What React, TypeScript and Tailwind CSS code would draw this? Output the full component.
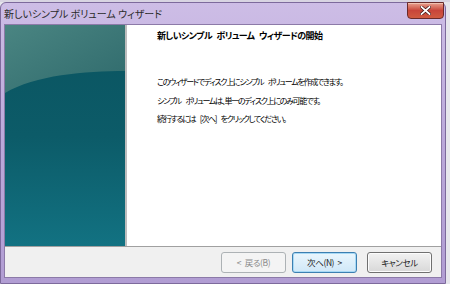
import React from "react";

const jp = "font-['Noto_Sans_CJK_JP','Noto_Sans',sans-serif] [font-feature-settings:'palt']";

function SidePanel() {
  return (
    <div className="relative w-[120px] shrink-0 bg-gradient-to-b from-[#0a5460] via-[#0c5b68] to-[#127282]">
      <svg className="absolute inset-0" width="120" height="222" viewBox="0 0 120 222">
        <defs>
          <linearGradient id="gloss" x1="0" y1="0" x2="1" y2="1">
            <stop offset="0" stopColor="#4a8582" />
            <stop offset="1" stopColor="#2f6a6c" />
          </linearGradient>
        </defs>
        <path d="M0 0 H120 V46 C80 46 30 50 0 68 Z" fill="url(#gloss)" />
      </svg>
    </div>
  );
}

function Btn({ label, kind }: { label: string; kind: "disabled" | "default" | "normal" }) {
  const base = "w-[65px] h-[21px] rounded-[3px] flex items-center justify-center text-[8.5px] tracking-[-0.4px] [word-spacing:2px] leading-none";
  if (kind === "disabled")
    return (
      <div className={`${base} border border-[#adb2b5] bg-[#f4f4f4] text-[#8a8a8a]`}>{label}</div>
    );
  if (kind === "default")
    return (
      <div className={`${base} border border-[#3c7fb1] bg-gradient-to-b from-[#eaf6fd] to-[#d0e8f8] text-[#1a1a1a] shadow-[inset_0_0_0_1px_#a7d9f5]`}>
        {label}
      </div>
    );
  return (
    <div className={`${base} border border-[#707070] bg-gradient-to-b from-[#f2f2f2] to-[#d8d8d8] text-[#1a1a1a] shadow-[inset_0_0_0_1px_#fcfcfc]`}>
      {label}
    </div>
  );
}

export default function App() {
  return (
    <div className={`w-[450px] h-[284px] bg-[#e6e6ec] overflow-hidden ${jp}`}>
      <div className="h-[2px] bg-[#d8d4e2]" />
      <div className="w-[446px] h-[282px] flex flex-col rounded-t-[6px] border border-[#7d6a9c] bg-gradient-to-b from-[#cdbde6] via-[#bba8da] to-[#b19dd3]">
        <div className="relative h-[21px] shrink-0 flex items-center pl-[3px]">
          <span className="text-[10px] text-[#2a2a2a] leading-none">新しいシンプル ボリューム ウィザード</span>
          <div className="absolute right-[1px] top-[-1px] w-[37px] h-[17px] rounded-b-[4px] border border-[#6a2a2a] bg-gradient-to-b from-[#e8a090] via-[#c8453a] to-[#d05a40] flex items-center justify-center shadow-[inset_0_1px_0_#f0c0b0]">
            <svg width="11" height="9" viewBox="0 0 11 9">
              <path d="M1.5 1 L9.5 8 M9.5 1 L1.5 8" stroke="#3a1010" strokeWidth="3.2" strokeLinecap="square" />
              <path d="M1.5 1 L9.5 8 M9.5 1 L1.5 8" stroke="#ffffff" strokeWidth="1.8" strokeLinecap="square" />
            </svg>
          </div>
        </div>
        <div className="mx-[3px] flex-1 flex flex-col border border-[#8c7aa8] bg-white">
          <div className="flex-1 flex">
            <SidePanel />
            <div className="w-[2px] bg-[#bdbdbd]" />
            <div className="flex-1 pl-[30px] pt-[5px] text-[#000]">
              <div className="text-[9px] tracking-[-0.6px] [word-spacing:3px] font-bold leading-[12px]">新しいシンプル ボリューム ウィザードの開始</div>
              <div className="mt-[31px] text-[8px] tracking-[-1.3px] [word-spacing:4px] leading-[18.5px]">
                <div>このウィザードでディスク上にシンプル ボリュームを作成できます。</div>
                <div>シンプル ボリュームは、単一のディスク上にのみ可能です。</div>
                <div>続行するには [次へ] をクリックしてください。</div>
              </div>
            </div>
          </div>
          <div className="h-[31px] shrink-0 border-t border-[#a0a0a0] bg-[#f0f0f0] flex items-center justify-end pr-[9px]">
            <Btn label="< 戻る(B)" kind="disabled" />
            <div className="w-[6px]" />
            <Btn label="次へ(N) >" kind="default" />
            <div className="w-[10px]" />
            <Btn label="キャンセル" kind="normal" />
          </div>
        </div>
        <div className="h-[5px] shrink-0" />
      </div>
    </div>
  );
}
